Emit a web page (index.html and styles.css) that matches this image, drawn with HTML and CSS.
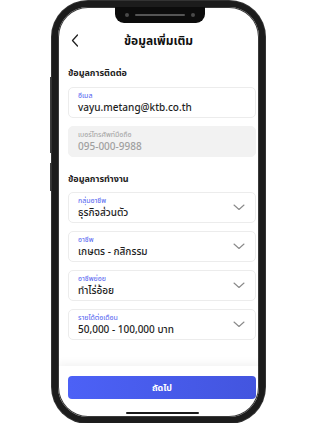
FILE: index.html
```html
<!DOCTYPE html>
<html lang="th">
<head>
    <meta charset="UTF-8">
    <title>ข้อมูลเพิ่มเติม</title>
    <link rel="stylesheet" href="styles.css">
</head>
<body>

<div class="phone">
    <span class="side-btn side-btn-top"></span>
    <span class="side-btn side-btn-bottom"></span>
    <div class="screen">
        <div class="notch">
            <span class="notch-dot"></span>
            <span class="notch-speaker"></span>
            <span class="notch-dot"></span>
        </div>

        <div class="header">
            <svg class="back-icon" width="8" height="13" viewBox="0 0 8 13">
                <path d="M6.5 1 L1.5 6.5 L6.5 12" fill="none" stroke="#222" stroke-width="1.3" stroke-linecap="round" stroke-linejoin="round"/>
            </svg>
            <h1 class="title">ข้อมูลเพิ่มเติม</h1>
        </div>

        <div class="content">
            <h2 class="section-title first">ข้อมูลการติดต่อ</h2>
            <div class="field">
                <span class="field-label">อีเมล</span>
                <span class="field-value">vayu.metang@ktb.co.th</span>
            </div>
            <div class="field disabled">
                <span class="field-label">เบอร์โทรศัพท์มือถือ</span>
                <span class="field-value">095-000-9988</span>
            </div>

            <h2 class="section-title">ข้อมูลการทำงาน</h2>
            <div class="field select">
                <span class="field-label">กลุ่มอาชีพ</span>
                <span class="field-value">ธุรกิจส่วนตัว</span>
                <svg class="chevron" width="12" height="7" viewBox="0 0 12 7"><path d="M1 1 L6 5.5 L11 1" fill="none" stroke="#8a8a8a" stroke-width="1.1" stroke-linecap="round" stroke-linejoin="round"/></svg>
            </div>
            <div class="field select">
                <span class="field-label">อาชีพ</span>
                <span class="field-value">เกษตร - กสิกรรม</span>
                <svg class="chevron" width="12" height="7" viewBox="0 0 12 7"><path d="M1 1 L6 5.5 L11 1" fill="none" stroke="#8a8a8a" stroke-width="1.1" stroke-linecap="round" stroke-linejoin="round"/></svg>
            </div>
            <div class="field select">
                <span class="field-label">อาชีพย่อย</span>
                <span class="field-value">ทำไร่อ้อย</span>
                <svg class="chevron" width="12" height="7" viewBox="0 0 12 7"><path d="M1 1 L6 5.5 L11 1" fill="none" stroke="#8a8a8a" stroke-width="1.1" stroke-linecap="round" stroke-linejoin="round"/></svg>
            </div>
            <div class="field select">
                <span class="field-label">รายได้ต่อเดือน</span>
                <span class="field-value">50,000 - 100,000 บาท</span>
                <svg class="chevron" width="12" height="7" viewBox="0 0 12 7"><path d="M1 1 L6 5.5 L11 1" fill="none" stroke="#8a8a8a" stroke-width="1.1" stroke-linecap="round" stroke-linejoin="round"/></svg>
            </div>
        </div>

        <div class="footer">
            <button class="next-btn">ถัดไป</button>
            <span class="home-bar"></span>
        </div>
    </div>
</div>

</body>
</html>
```

FILE: styles.css
```css
body {
    margin: 0;
    background: #fff;
    font-family: "Noto Sans Thai", "Noto Sans", "DejaVu Sans", sans-serif;
    color: #222;
}

.phone {
    position: relative;
    box-sizing: border-box;
    width: 213px;
    height: 422px;
    margin: 1px 0 0 52px;
    border: 6px solid #1c1c1c;
    border-radius: 36px;
    background: #fff;
    box-shadow: inset 0 0 0 1px #3a3a3a, 0 0 0 1px #333;
}

.side-btn {
    position: absolute;
    left: -8px;
    width: 1px;
    background: #3a3a3a;
}

.side-btn-top {
    top: 70px;
    height: 76px;
}

.side-btn-bottom {
    top: 156px;
    height: 28px;
}

.screen {
    display: flex;
    flex-direction: column;
    height: 100%;
    border-radius: 30px;
    overflow: hidden;
    position: relative;
}

.notch {
    position: absolute;
    top: 0;
    left: 57px;
    width: 90px;
    height: 16px;
    background: #0c0c0c;
    border-radius: 0 0 9px 9px;
    display: flex;
    align-items: center;
    justify-content: center;
    gap: 6px;
}

.notch-dot {
    width: 4px;
    height: 4px;
    border-radius: 50%;
    background: #4a4a4a;
}

.notch-speaker {
    width: 50px;
    height: 2px;
    border-radius: 1px;
    background: #555;
}

.header {
    position: relative;
    height: 27px;
    margin-top: 20px;
    display: flex;
    align-items: center;
    justify-content: center;
}

.back-icon {
    position: absolute;
    left: 13px;
    top: 7px;
}

.title {
    margin: 0;
    font-size: 12px;
    font-weight: 700;
    color: #111;
}

.content {
    flex: 1;
    padding: 0 3px 0 10px;
}

.section-title {
    margin: 16px 0 7px;
    font-size: 9px;
    line-height: 12px;
    font-weight: 700;
    color: #222;
}

.section-title.first {
    margin-top: 13px;
    margin-bottom: 8px;
}

.field {
    position: relative;
    box-sizing: border-box;
    height: 31px;
    margin-bottom: 8px;
    padding: 3px 9px 0;
    border: 1px solid #ececec;
    border-radius: 5px;
    background: #fff;
    display: flex;
    flex-direction: column;
}

.field-label {
    font-size: 7px;
    line-height: 10px;
    color: #4f5ef0;
}

.field-value {
    font-size: 10px;
    line-height: 14px;
    font-weight: 500;
    color: #1e1e1e;
}

.field.disabled {
    background: #f2f2f2;
    border-color: #f2f2f2;
}

.field.disabled .field-label,
.field.disabled .field-value {
    color: #a0a0a0;
}

.chevron {
    position: absolute;
    right: 10px;
    top: 11px;
}

.footer {
    position: relative;
    height: 51px;
    padding: 10px 3px 0 10px;
    box-sizing: border-box;
    box-shadow: 0 -3px 8px rgba(0, 0, 0, 0.05);
}

.next-btn {
    display: block;
    width: 100%;
    height: 23px;
    border: none;
    border-radius: 4px;
    background: linear-gradient(90deg, #4c61f6, #4355df);
    color: #fff;
    font-family: inherit;
    font-size: 9px;
    font-weight: 700;
}

.home-bar {
    position: absolute;
    left: 68px;
    bottom: 3px;
    width: 73px;
    height: 2px;
    border-radius: 1px;
    background: #1a1a1a;
}
```
